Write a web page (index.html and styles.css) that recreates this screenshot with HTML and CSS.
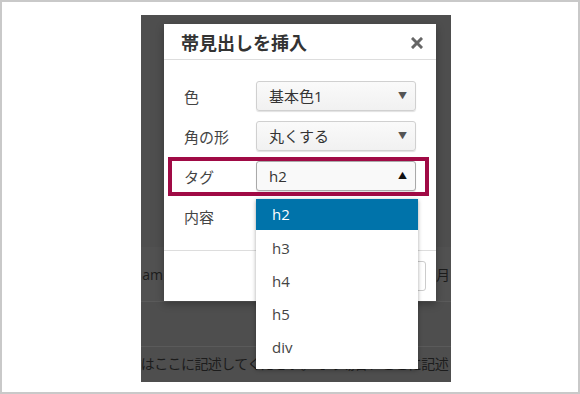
FILE: index.html
```html
<!DOCTYPE html>
<html lang="ja">
<head>
    <meta charset="UTF-8">
    <meta name="viewport" content="width=device-width, initial-scale=1.0">
    <title>帯見出しを挿入</title>
    <link rel="stylesheet" href="styles.css">
</head>
<body>

<div class="frame">
    <div class="stage">
        <!-- editor behind the overlay -->
        <div class="editor">
            <div class="editor-top"></div>
            <div class="editor-row meta">
                <span>9:00 am</span>
                <span>2017年1月12日</span>
            </div>
            <div class="editor-row blank"></div>
            <div class="editor-row body-text">本文はここに記述してください。その場合、ここに記述してください。</div>
        </div>

        <div class="modal">
            <div class="modal-header">
                <h1>帯見出しを挿入</h1>
                <span class="close">
                    <svg width="12" height="12" viewBox="0 0 12 12">
                        <path d="M2 2 L10 10 M10 2 L2 10" stroke="#666" stroke-width="3" stroke-linecap="square"/>
                    </svg>
                </span>
            </div>
            <div class="modal-body">
                <div class="field">
                    <label>色</label>
                    <div class="select">基本色1<span class="arrow">▼</span></div>
                </div>
                <div class="field">
                    <label>角の形</label>
                    <div class="select">丸くする<span class="arrow">▼</span></div>
                </div>
                <div class="field tag-field">
                    <span class="highlight"></span>
                    <label>タグ</label>
                    <div class="select open">h2<span class="arrow">▲</span></div>
                    <ul class="dropdown">
                        <li class="active">h2</li>
                        <li>h3</li>
                        <li>h4</li>
                        <li>h5</li>
                        <li>div</li>
                    </ul>
                </div>
                <div class="field">
                    <label>内容</label>
                    <div class="select"></div>
                </div>
            </div>
            <div class="modal-footer">
                <button>挿入する</button>
            </div>
        </div>
    </div>
</div>

</body>
</html>
```

FILE: styles.css
```css
body {
    margin: 0;
    font-family: "Open Sans", "Noto Sans CJK JP", sans-serif;
    color: #444;
}

.frame {
    width: 580px;
    height: 394px;
    box-sizing: border-box;
    border: 2px solid #c9c9c9;
    background: white;
    overflow: hidden;
}

.stage {
    position: relative;
    width: 310px;
    height: 367px;
    margin: 13px 0 0 139px;
    background: #4e4e4e;
    overflow: hidden;
}

.editor-top {
    height: 232px;
}

.editor-row {
    border-bottom: 1px solid #5a5a5a;
    color: #1c1c1c;
    white-space: nowrap;
}

.meta {
    height: 54px;
    display: flex;
    justify-content: space-between;
    align-items: center;
    font-size: 14px;
    margin: 0 -29px 0 -30px;
    background: #515151;
}

.blank {
    height: 44px;
}

.body-text {
    border-bottom: none;
    font-size: 14px;
    letter-spacing: -0.6px;
    margin-left: -27px;
    padding-top: 6px;
}

.modal {
    position: absolute;
    left: 23px;
    top: 9px;
    width: 272px;
    background: white;
    box-shadow: 0 3px 8px rgba(0, 0, 0, 0.3);
}

.modal-header {
    height: 35px;
    border-bottom: 1px solid #dddddd;
    display: flex;
    align-items: center;
    justify-content: space-between;
    padding: 0 13px 0 17px;
}

.modal-header h1 {
    margin: 0;
    font-size: 18px;
    font-weight: bold;
    color: #333;
    font-family: "Noto Sans CJK JP", sans-serif;
}

.close {
    display: flex;
    margin-top: 2px;
}

.modal-body {
    padding: 21px 20px 19px 20px;
}

.field {
    display: flex;
    align-items: center;
    height: 30px;
    margin-bottom: 10px;
}

.field:last-child {
    margin-bottom: 0;
}

.field label {
    width: 72px;
    font-size: 15px;
    color: #444;
}

.select {
    position: relative;
    width: 160px;
    height: 30px;
    box-sizing: border-box;
    border: 1px solid #d0d0d0;
    border-radius: 3px;
    background: linear-gradient(#fafafa, #f1f1f1);
    box-shadow: 0 1px 1px rgba(0, 0, 0, 0.12);
    padding-left: 12px;
    font-size: 15px;
    line-height: 28px;
    color: #333;
}

.arrow {
    position: absolute;
    right: 8px;
    top: 0;
    font-size: 9px;
    color: #555;
}

.tag-field {
    position: relative;
}

.select.open {
    background: #f9f9f9;
    border-color: #a9a9a9;
}

.select.open .arrow {
    color: #111;
}

.highlight {
    position: absolute;
    left: -16px;
    top: -4px;
    width: 261px;
    height: 39px;
    box-sizing: border-box;
    border: 4px solid #a00a45;
}

.dropdown {
    position: absolute;
    left: 72px;
    top: 38px;
    z-index: 2;
    width: 162px;
    margin: 0;
    padding: 0 0 5px 0;
    list-style: none;
    background: white;
    box-shadow: 0 1px 4px rgba(0, 0, 0, 0.35);
}

.dropdown li {
    height: 33px;
    line-height: 33px;
    padding-left: 16px;
    font-size: 15px;
    color: #444;
}

.dropdown li.active {
    background: #0073aa;
    color: white;
    height: 31px;
    line-height: 31px;
    margin-bottom: 2px;
}

.modal-footer {
    border-top: 1px solid #dddddd;
    padding: 10px;
    display: flex;
    justify-content: flex-end;
}

button {
    height: 30px;
    padding: 0 14px;
    border: 1px solid #cccccc;
    border-radius: 3px;
    background: white;
    font-family: "Noto Sans CJK JP", sans-serif;
    font-size: 13px;
    color: #555;
}
```
